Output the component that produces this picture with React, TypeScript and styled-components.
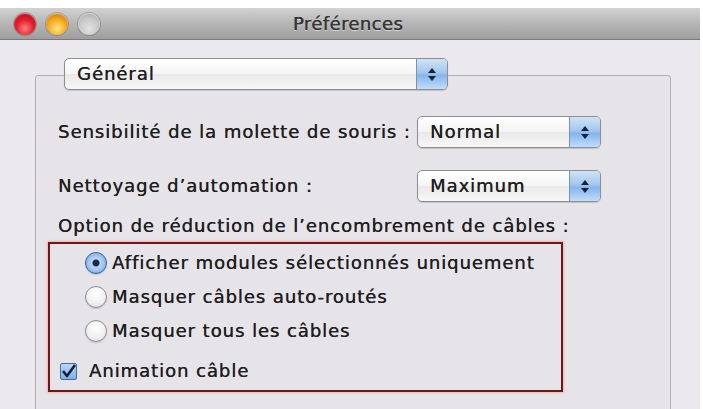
import React from "react";
import styled, { createGlobalStyle } from "styled-components";

const Global = createGlobalStyle`
  html, body { margin: 0; padding: 0; background: #ffffff; }
  body { font-family: "DejaVu Sans", "Liberation Sans", sans-serif; }
  * { box-sizing: border-box; }
`;

const Window = styled.div`
  margin-top: 8px;
  width: 700px;
  height: 401px;
  background: #ebe9ed;
  overflow: hidden;
  display: flex;
  flex-direction: column;
`;

const TitleBar = styled.div`
  height: 32px;
  flex: 0 0 32px;
  display: flex;
  align-items: center;
  padding-left: 14px;
  background: linear-gradient(#d2d2d2, #b6b6b6 50%, #9e9e9e);
  border-bottom: 1px solid #7a7a7a;
`;

const Lights = styled.div`
  display: flex;
  gap: 10px;
`;

const Light = styled.div<{ $c: string }>`
  width: 22px;
  height: 22px;
  border-radius: 50%;
  background: ${(p) =>
    p.$c === "red"
      ? "radial-gradient(circle at 50% 70%, #ff8080 0%, #e3202e 45%, #a00a16 100%)"
      : p.$c === "orange"
      ? "radial-gradient(circle at 50% 70%, #ffe680 0%, #f3a71f 50%, #b8660a 100%)"
      : "radial-gradient(circle at 50% 70%, #e2e2e2 0%, #c6c6c6 55%, #9c9c9c 100%)"};
  box-shadow: inset 0 1px 1px rgba(255, 255, 255, 0.5), 0 0 0 1px rgba(90, 90, 90, 0.35);
`;

const Title = styled.div`
  flex: 1;
  text-align: center;
  margin-left: -104px;
  font-size: 18px;
  color: #363636;
  text-shadow: 0.3px 0 0 #363636, 0 1px 0 rgba(255, 255, 255, 0.5);
  letter-spacing: 0.4px;
`;

const Content = styled.div`
  padding: 35px 0 0 35px;
`;

const GroupBox = styled.div`
  width: 636px;
  height: 400px;
  border: 1px solid #b0afb3;
  border-radius: 3px;
  background: #e6e4e9;
  display: flex;
  flex-direction: column;
`;

const Popup = styled.div<{ $w: number }>`
  width: ${(p) => p.$w}px;
  height: 32px;
  display: flex;
  align-items: stretch;
  border: 1px solid #8e8e92;
  border-radius: 5px;
  background: linear-gradient(#ffffff, #f4f4f4 50%, #e9e9e9 51%, #f7f7f7);
  box-shadow: 0 1px 1px rgba(0, 0, 0, 0.15);
  overflow: hidden;
`;

const Text = styled.div`
  font-size: 18px;
  line-height: 20px;
  color: #1f1f1f;
  letter-spacing: 0.95px;
  white-space: nowrap;
  text-shadow: 0.3px 0 0 #1f1f1f;
`;

const PopupLabel = styled(Text)`
  flex: 1;
  display: flex;
  align-items: center;
  padding-left: 12px;
`;

const Stepper = styled.div`
  width: 31px;
  border-left: 1px solid #7a93b5;
  background: linear-gradient(#cfe3f7, #a3c7ef 45%, #86b5ec 55%, #c0ddfb);
  display: flex;
  flex-direction: column;
  align-items: center;
  justify-content: center;
  gap: 3px;
`;

const HeaderPopup = styled.div`
  margin: -18px 0 0 28px;
`;

const Row = styled.div<{ $mt: number }>`
  margin-top: ${(p) => p.$mt}px;
  padding-left: 22px;
  display: grid;
  grid-template-columns: 359px 184px;
  align-items: center;
`;

const OptionLabel = styled(Text)`
  margin-top: 14px;
  padding-left: 22px;
`;

const RedBox = styled.div`
  margin: 6px 0 0 12px;
  width: 515px;
  height: 150px;
  border: 2px solid #6e1719;
  box-shadow: 0 0 2px 1px rgba(255, 160, 160, 0.7);
  padding-top: 2px;
  display: flex;
  flex-direction: column;
`;

const Choice = styled.div<{ $pl: number; $gap: number; $mt?: number }>`
  height: 34px;
  margin-top: ${(p) => p.$mt ?? 0}px;
  padding-left: ${(p) => p.$pl}px;
  display: flex;
  align-items: center;
  gap: ${(p) => p.$gap}px;
`;

const Radio = styled.div<{ $on?: boolean }>`
  width: 22px;
  height: 22px;
  border-radius: 50%;
  border: 1px solid ${(p) => (p.$on ? "#3d5f8d" : "#8c8c8e")};
  background: ${(p) =>
    p.$on
      ? "radial-gradient(circle at 50% 50%, #1b2a44 0 3px, #bcd9f6 4px, #7fb0ea 80%, #5b8fd0 100%)"
      : "radial-gradient(circle at 50% 35%, #ffffff 0%, #f1f1f1 55%, #d9d9db 100%)"};
  box-shadow: 0 1px 1px rgba(0, 0, 0, 0.15);
`;

const Check = styled.div`
  width: 17px;
  height: 17px;
  border: 1px solid #4a6b98;
  border-radius: 2px;
  background: linear-gradient(#b9d7f6, #7eb0ea);
  display: flex;
  align-items: center;
  justify-content: center;
`;

const Arrows = () => (
  <>
    <svg width="8" height="5" viewBox="0 0 8 5">
      <path d="M0 5 L4 0 L8 5 Z" fill="#14243c" />
    </svg>
    <svg width="8" height="5" viewBox="0 0 8 5">
      <path d="M0 0 L4 5 L8 0 Z" fill="#14243c" />
    </svg>
  </>
);

const Select = ({ w, text }: { w: number; text: string }) => (
  <Popup $w={w}>
    <PopupLabel>{text}</PopupLabel>
    <Stepper>
      <Arrows />
    </Stepper>
  </Popup>
);

export default function App() {
  return (
    <>
      <Global />
      <Window>
        <TitleBar>
          <Lights>
            <Light $c="red" />
            <Light $c="orange" />
            <Light $c="gray" />
          </Lights>
          <Title>Préférences</Title>
        </TitleBar>
        <Content>
          <GroupBox>
            <HeaderPopup>
              <Select w={384} text="Général" />
            </HeaderPopup>
            <Row $mt={26}>
              <Text>Sensibilité de la molette de souris :</Text>
              <Select w={184} text="Normal" />
            </Row>
            <Row $mt={22}>
              <Text>Nettoyage d’automation :</Text>
              <Select w={184} text="Maximum" />
            </Row>
            <OptionLabel>Option de réduction de l’encombrement de câbles :</OptionLabel>
            <RedBox>
              <Choice $pl={35} $gap={5}>
                <Radio $on />
                <Text>Afficher modules sélectionnés uniquement</Text>
              </Choice>
              <Choice $pl={35} $gap={5}>
                <Radio />
                <Text>Masquer câbles auto-routés</Text>
              </Choice>
              <Choice $pl={35} $gap={5}>
                <Radio />
                <Text>Masquer tous les câbles</Text>
              </Choice>
              <Choice $pl={10} $gap={12} $mt={6}>
                <Check>
                  <svg width="15" height="14" viewBox="0 0 15 14">
                    <path d="M2 7 L6 12 L14 1" fill="none" stroke="#132238" strokeWidth="2.6" strokeLinejoin="round" />
                  </svg>
                </Check>
                <Text>Animation câble</Text>
              </Choice>
            </RedBox>
          </GroupBox>
        </Content>
      </Window>
    </>
  );
}
